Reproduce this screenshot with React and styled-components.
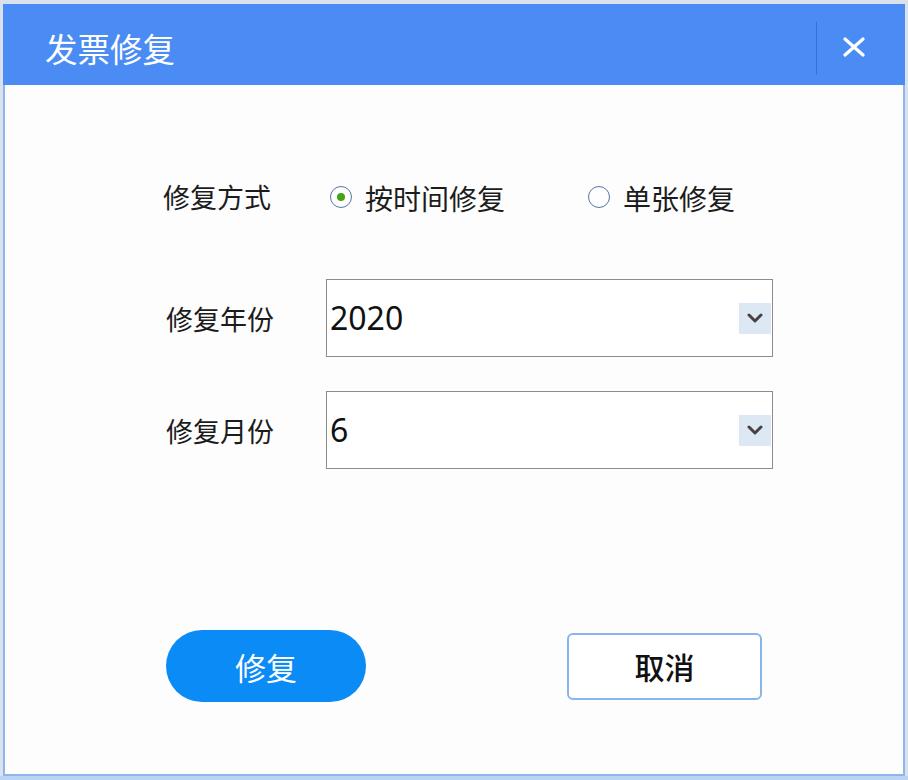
import React, { useState } from "react"
import styled, { createGlobalStyle } from "styled-components"

const colors = {
  page: "#d9e1ec",
  frame: "#8fb5ee",
  header: "#4b8cf4",
  headerLine: "#3a70cf",
  body: "#fdfdfe",
  text: "#1c1c1c",
  primary: "#0b8bf6",
  cancelBorder: "#8ab4ec",
  arrowBox: "#dde8f5",
}

const cjk = `"Noto Sans CJK SC", "Noto Sans", sans-serif`

const GlobalStyle = createGlobalStyle`
  html, body {
    margin: 0;
    padding: 0;
    background: ${colors.page};
  }
  body {
    font-family: ${cjk};
  }
`

const Screen = styled.div`
  width: 908px;
  height: 780px;
  padding: 4px 3px 0 3px;
  box-sizing: border-box;
  background: linear-gradient(to bottom, ${colors.page} 0, ${colors.page} 776px, #bcd3f2 776px);
`

const Dialog = styled.div`
  width: 902px;
  height: 772px;
  box-sizing: border-box;
  border: 2px solid ${colors.frame};
  border-top: none;
  background: ${colors.body};
  display: flex;
  flex-direction: column;
`

const Header = styled.div`
  height: 81px;
  flex: none;
  background: ${colors.header};
  display: flex;
  align-items: center;
  padding-left: 40px;
  margin: 0 -2px;
`

const Title = styled.h1`
  margin: 5px 0 0 2px;
  font-size: 32.5px;
  font-weight: 400;
  color: #fff;
`

const Separator = styled.div`
  margin: 8px 0 0 auto;
  width: 1px;
  height: 53px;
  background: ${colors.headerLine};
`

const CloseButton = styled.button`
  width: 74px;
  height: 60px;
  margin: 5px 14px 0 0;
  border: none;
  background: transparent;
  display: flex;
  align-items: center;
  justify-content: center;
  padding: 0;
  cursor: pointer;
`

const Form = styled.div`
  display: flex;
  flex-direction: column;
  padding-left: 158px;
`

const Row = styled.div`
  display: grid;
  grid-template-columns: 163px 447px;
  height: ${p => p.$height}px;
  margin-top: ${p => p.$top}px;
`

const Label = styled.div`
  font-size: 27px;
  color: ${colors.text};
  display: flex;
  align-items: center;
  padding-left: ${p => p.$shift || 0}px;
  margin-top: ${p => p.$lift || 0}px;
`

const RadioGroup = styled.div`
  display: flex;
  align-items: center;
  gap: 83px;
  padding-left: 4px;
`

const RadioOption = styled.label`
  display: flex;
  align-items: center;
  gap: 13px;
  font-size: 28px;
  color: ${colors.text};
  white-space: nowrap;
  cursor: pointer;
`

const RadioDot = styled.span`
  width: 22px;
  height: 22px;
  flex: none;
  box-sizing: border-box;
  border-radius: 50%;
  border: 1.5px solid #5577a8;
  background: radial-gradient(circle, #fff 60%, #eef2f8 100%);
  display: flex;
  align-items: center;
  justify-content: center;
  margin-top: -3px;

  &::after {
    content: "";
    width: 8px;
    height: 8px;
    border-radius: 50%;
    background: ${p => (p.$checked ? "#47a11a" : "transparent")};
  }
`

const Select = styled.div`
  border: 1px solid #8c8c8c;
  background: #fff;
  display: flex;
  align-items: center;
  padding-left: 3px;
  padding-right: 1px;
`

const SelectValue = styled.span`
  flex: 1;
  font-family: "Noto Sans", "Open Sans", sans-serif;
  font-size: 32px;
  color: #111;
  margin-top: -1px;
`

const ArrowBox = styled.span`
  width: 32px;
  height: 31px;
  background: ${colors.arrowBox};
  display: flex;
  align-items: center;
  justify-content: center;
`

const Actions = styled.div`
  display: flex;
  align-items: center;
  justify-content: space-between;
  width: 596px;
  height: 72px;
  margin: 161px 0 0 3px;
`

const PrimaryButton = styled.button`
  width: 200px;
  height: 72px;
  border: none;
  border-radius: 36px;
  background: ${colors.primary};
  color: #fff;
  font-family: ${cjk};
  font-size: 31px;
  cursor: pointer;
`

const CancelButton = styled.button`
  width: 195px;
  height: 67px;
  box-sizing: border-box;
  border: 2px solid ${colors.cancelBorder};
  border-radius: 6px;
  background: #fff;
  color: #111;
  font-family: ${cjk};
  font-size: 30px;
  font-weight: 500;
  cursor: pointer;
`

const Chevron = () => (
  <svg width="16" height="10" viewBox="0 0 16 10">
    <path d="M2 2 L8 8 L14 2" fill="none" stroke="#4a4242" strokeWidth="3" strokeLinecap="round" strokeLinejoin="round" />
  </svg>
)

const CloseIcon = () => (
  <svg width="24" height="20" viewBox="0 0 24 20">
    <path d="M3 2 L21 18 M21 2 L3 18" stroke="#fff" strokeWidth="3.2" strokeLinecap="round" />
  </svg>
)

export default function App() {
  const [mode, setMode] = useState("time")

  return (
    <>
      <GlobalStyle />
      <Screen>
        <Dialog>
          <Header>
            <Title>发票修复</Title>
            <Separator />
            <CloseButton aria-label="关闭">
              <CloseIcon />
            </CloseButton>
          </Header>

          <Form>
            <Row $top={91} $height={44}>
              <Label $lift={-4}>修复方式</Label>
              <RadioGroup>
                <RadioOption onClick={() => setMode("time")}>
                  <RadioDot $checked={mode === "time"} />
                  按时间修复
                </RadioOption>
                <RadioOption onClick={() => setMode("single")}>
                  <RadioDot $checked={mode === "single"} />
                  单张修复
                </RadioOption>
              </RadioGroup>
            </Row>

            <Row $top={59} $height={78}>
              <Label $shift={3}>修复年份</Label>
              <Select>
                <SelectValue>2020</SelectValue>
                <ArrowBox>
                  <Chevron />
                </ArrowBox>
              </Select>
            </Row>

            <Row $top={34} $height={78}>
              <Label $shift={3}>修复月份</Label>
              <Select>
                <SelectValue>6</SelectValue>
                <ArrowBox>
                  <Chevron />
                </ArrowBox>
              </Select>
            </Row>

            <Actions>
              <PrimaryButton>修复</PrimaryButton>
              <CancelButton>取消</CancelButton>
            </Actions>
          </Form>
        </Dialog>
      </Screen>
    </>
  )
}
